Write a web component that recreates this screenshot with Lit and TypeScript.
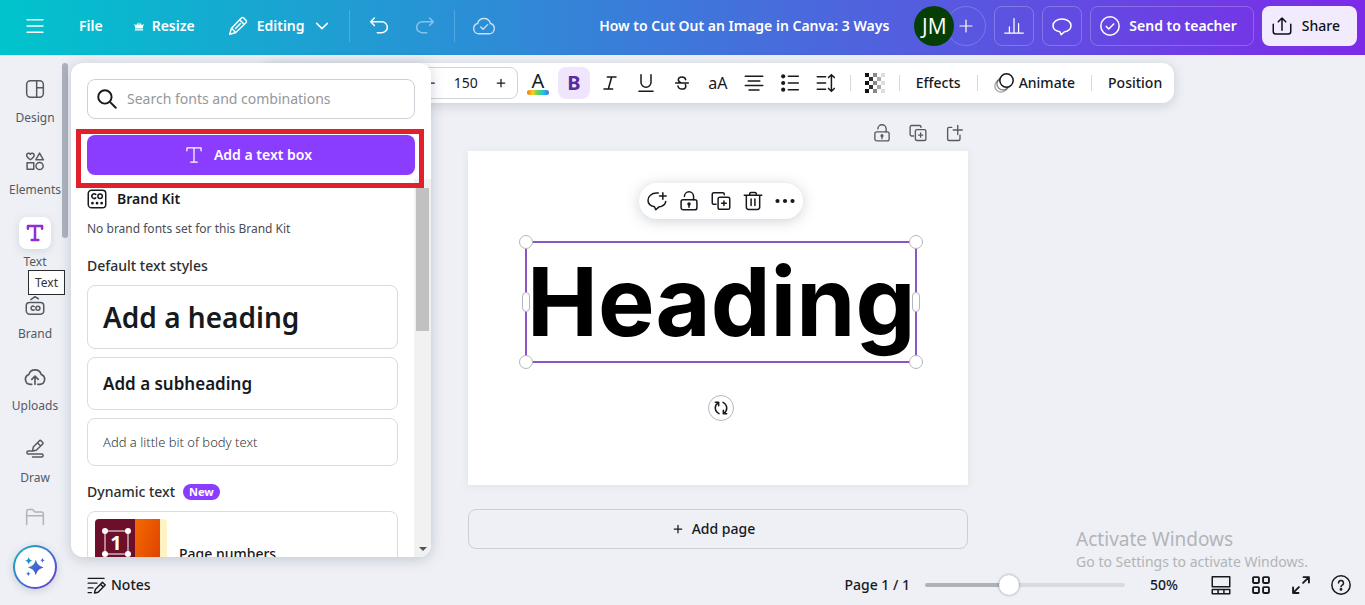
import { LitElement, html, css, svg, TemplateResult, SVGTemplateResult } from "lit";
import { customElement, state } from "lit/decorators.js";
import { classMap } from "lit/directives/class-map.js";

const paths: Record<string, SVGTemplateResult> = {
  menu: svg`<path d="M2.500 4.500h19M2.500 12h19M2.500 19.500h19"/>`,
  crown: svg`<path fill="currentColor" stroke="none" d="M4 18.500h16l.500 2.500H3.500zM2.500 7.500l4 3 2.500-5 1.500 5L12 3l1.500 7.500L15 5.500l2.500 5 4-3L19.500 17h-15z"/>`,
  pencil: svg`<path d="M2 22l2-7L16 2.500a2 2 0 0 1 2.800 0l2.700 2.700a2 2 0 0 1 0 2.800L9 20zM14 4.500l5.500 5.500M4.500 15L9 19.500M9 15l6-6"/>`,
  chevron: svg`<path d="M4 8l8 8 8-8"/>`,
  undo: svg`<path d="M6.500 2.500l-4.500 4.500 4.500 4.500M2 7h13.500a6.500 6.500 0 0 1 0 13H10"/>`,
  redo: svg`<path d="M17.500 2.500l4.500 4.500-4.500 4.500M22 7H8.500a6.500 6.500 0 0 0 0 13H14"/>`,
  cloudCheck: svg`<path d="M6.500 20.500a5.700 5.700 0 0 1-1.500-11.200 7.200 7.200 0 0 1 14 0 5.700 5.700 0 0 1-1.500 11.200zM8.500 13l2.500 2.500 5-5"/>`,
  plus: svg`<path d="M12 3v18M3 12h18"/>`,
  minus: svg`<path d="M4 12h16"/>`,
  chart: svg`<path d="M.8 20.500h22.400M6.500 20v-7M12 20V3M17.500 20V9"/>`,
  comment: svg`<path d="M9.500 19C4.500 18.200 1.200 15.300 1.200 11.500 1.200 7 6 3.500 12 3.500s10.800 3.500 10.800 8-3.300 7-8.300 7.700L11 22.500l-1.500-3.500z"/>`,
  checkCircle: svg`<circle cx="12" cy="12" r="11"/><path d="M7.500 12.500l3 3 6-6"/>`,
  share: svg`<path d="M12 17V2.500M7.500 7L12 2.500 16.500 7M1.500 10v8.500a3 3 0 0 0 3 3h15a3 3 0 0 0 3-3V10"/>`,
  design: svg`<rect x="2" y="2" width="20" height="20" rx="4.500"/><path d="M14 2v20M14 10.500h8"/>`,
  elements: svg`<path d="M6.500 10.500C3 8 2 6.600 2 5a2.400 2.400 0 0 1 4.500-1A2.400 2.400 0 0 1 11 5c0 1.600-1 3-4.500 5.500zM17.500 2.500l4.500 8h-9z"/><rect x="2.500" y="14" width="8" height="8"/><circle cx="17.500" cy="18" r="4.300"/>`,
  text: svg`<path d="M3.500 7V3.500h17V7M12 3.500v17M8 20.500h8"/>`,
  brand: svg`<rect x="1.500" y="9" width="21" height="14" rx="4"/><path d="M11 13.800a2.400 2.400 0 1 0 0 4"/><circle cx="15.500" cy="15.800" r="2.400"/><path d="M7 5.500l5-3.500 4 2.500"/>`,
  upload: svg`<path d="M8.500 20H7a5.500 5.500 0 0 1-1.700-10.700 7 7 0 0 1 13.500 0A5.500 5.500 0 0 1 17 20h-2M12 20v-8.500M8.500 14.500l3.500-3.500 3.500 3.500"/>`,
  draw: svg`<path d="M9 14.500l1-5L17 2.300a1.800 1.800 0 0 1 2.500 0l1.500 1.500a1.800 1.800 0 0 1 0 2.500l-7.500 7.200zM15 4.500l3.500 3.500M9 14.500H4a1.700 1.700 0 0 0 0 3.500h16a1.700 1.700 0 0 1 0 3.500H9"/>`,
  folder: svg`<path d="M2 21V5.500A2.500 2.500 0 0 1 4.500 3h4.500l3 3h7.500A2.500 2.500 0 0 1 22 8.500V21M2 10.500h20"/>`,
  search: svg`<circle cx="9.500" cy="9.500" r="8"/><path d="M15.500 15.500L22.500 22.500"/>`,
  kit: svg`<rect x="1.500" y="1.500" width="21" height="21" rx="4"/><path d="M10.500 6.500a2.800 2.800 0 1 0 0 4.200"/><circle cx="15.700" cy="8.600" r="2.700"/><path stroke-width="3.200" d="M6.500 17h.1M12 17h.1M17.500 17h.1"/>`,
  italic: svg`<path d="M8 3h13M3 21h13M14.500 3l-5 18"/>`,
  underline: svg`<path d="M6 2V11a6 6 0 0 0 12 0V2M3.500 22h17"/>`,
  strike: svg`<path d="M17.500 7c-.5-2.500-2.500-4-5.500-4-3.200 0-5.500 1.700-5.500 4.300 0 2.200 1.500 3.400 4 4.200M17 14.500c.4.700.7 1.300.7 2.200 0 2.600-2.400 4.300-5.700 4.300-3.500 0-5.700-1.800-6-4.500M2.500 12h19"/>`,
  align: svg`<path d="M1.500 4h21M5 9.500h14M1.500 15h21M6 20.500h12"/>`,
  list: svg`<path d="M10 4H22M10 12H22M10 20H22"/><g fill="currentColor" stroke="none"><circle cx="3.800" cy="4" r="2.500"/><circle cx="3.800" cy="12" r="2.500"/><circle cx="3.800" cy="20" r="2.500"/></g>`,
  spacing: svg`<path d="M1.500 4.500h10M1.500 12h10M1.500 19.500h10M18.500 2.500v19M15 5.500l3.500-3.500L22 5.500M15 18.500l3.500 3.500 3.500-3.500"/>`,
  animate: svg`<circle cx="8.500" cy="15.500" r="7.500" opacity=".35"/><circle cx="11" cy="13" r="7.500" opacity=".5"/><circle cx="15" cy="9" r="8" fill="#fff"/>`,
  unlock: svg`<rect x="2.500" y="10.500" width="19" height="12" rx="2.500"/><path d="M6.500 6.500a5.500 5.500 0 0 1 11 0v4M12 16v3.500"/><circle cx="12" cy="15.500" r="1.200" fill="currentColor"/>`,
  duplicate: svg`<path d="M6 16H3.500a2 2 0 0 1-2-2V4a2 2 0 0 1 2-2H14a2 2 0 0 1 2 2v.500"/><rect x="8.500" y="7.500" width="14" height="14.500" rx="2"/><path d="M15.500 12v5.500M12.700 14.800h5.600"/>`,
  newPage: svg`<path d="M9 4.500H5.500a2 2 0 0 0-2 2V20a2 2 0 0 0 2 2h12.500a2 2 0 0 0 2-2v-5M17 2v12M11 8h12"/>`,
  commentPlus: svg`<path d="M13.500 2.500h-2C5.500 2.500 1.200 6.500 1.200 11c0 4 2.800 7 7.800 7.800l1.500 3.700 3.500-3.200c5-.7 8-3.300 8.500-6.800M19 2v8M15 6h8"/>`,
  trash: svg`<path d="M1.500 5h21M8 5V3.500A1.800 1.800 0 0 1 9.800 1.700h4.400A1.800 1.800 0 0 1 16 3.500V5M4 5v14.500a2.700 2.700 0 0 0 2.700 2.700h10.600a2.700 2.700 0 0 0 2.700-2.700V5M9.700 9.500v8M14.300 9.500v8"/>`,
  more: svg`<g fill="currentColor" stroke="none"><circle cx="3" cy="12" r="2.500"/><circle cx="12" cy="12" r="2.500"/><circle cx="21" cy="12" r="2.500"/></g>`,
  rotate: svg`<path d="M9 20.500C1.500 16.500 2 7.500 8 4M3.500 3.500H8.500v5M15 3.500c7.500 4 7 13 1 16.500M20.500 20.500H15.500v-5"/>`,
  notes: svg`<path d="M1.500 3h20M1.500 9h11M1.500 15h6M1.500 21h4M9.500 21.500l1-4.500 9-9 3.500 3.500-9 9zM17 10.500l3.500 3.500"/>`,
  thumbs: svg`<rect x="1.500" y="2" width="21" height="12"/><path d="M1.500 17.500h21V22.500h-21zM8.500 17.500v5M15.500 17.500v5"/>`,
  grid: svg`<rect x="2.500" y="2.500" width="7" height="7" rx="1"/><rect x="14.500" y="2.500" width="7" height="7" rx="1"/><rect x="2.500" y="14.500" width="7" height="7" rx="1"/><rect x="14.500" y="14.500" width="7" height="7" rx="1"/>`,
  expand: svg`<path d="M14.500 9.500l7-7M15 2.500h6.500V9M9.500 14.500l-7 7M2.500 15v6.500H9"/>`,
  help: svg`<circle cx="12" cy="12" r="11"/><path d="M9 9.500a3 3 0 1 1 4.500 2.600c-1 .6-1.500 1.100-1.500 2.100"/><circle cx="12" cy="17.300" r=".8" fill="currentColor"/>`,
};

const icon = (name: string, size = "m", weight = "regular"): TemplateResult => html`
  <svg class="icon ${size} ${weight}" viewBox="0 0 24 24" aria-hidden="true">${paths[name]}</svg>
`;

const railItems = [
  { id: "design", label: "Design" },
  { id: "elements", label: "Elements" },
  { id: "text", label: "Text" },
  { id: "brand", label: "Brand" },
  { id: "upload", label: "Uploads" },
  { id: "draw", label: "Draw" },
];

const checkerShades = [
  ["#111", "", "#888", "", "#ddd"],
  ["", "#333", "", "#aaa", ""],
  ["#111", "", "#888", "", "#ddd"],
  ["", "#333", "", "#aaa", ""],
  ["#111", "", "#888", "", "#ddd"],
];

@customElement("app-root")
export class AppRoot extends LitElement {
  @state() private tool = "text";
  @state() private bold = true;
  @state() private zoom = 41;

  static styles = css`
    :host {
      display: flex;
      flex-direction: column;
      height: 100vh;
      min-height: 600px;
      overflow: hidden;
      background: #eef0f5;
      color: #16191d;
      font: 500 14px/20px "Noto Sans", "Open Sans", sans-serif;
    }
    * { box-sizing: border-box; }
    button, input { font: inherit; color: inherit; }
    button {
      display: inline-flex;
      align-items: center;
      justify-content: center;
      padding: 0;
      border: 0;
      background: none;
      white-space: nowrap;
      cursor: pointer;
    }
    .icon {
      flex: none;
      width: 20px;
      height: 20px;
      fill: none;
      stroke: currentColor;
      stroke-width: 1.8;
      stroke-linecap: round;
      stroke-linejoin: round;
    }
    .icon.xs { width: 12px; height: 12px; }
    .icon.s { width: 16px; height: 16px; }
    .icon.l { width: 22px; height: 22px; }
    .icon.bold { stroke-width: 3; }
    .icon.medium { stroke-width: 2.3; }
    .icon.thin { stroke-width: 1.5; }

    .header {
      display: flex;
      justify-content: space-between;
      flex: none;
      height: 55px;
      padding: 6px 8px;
      background: linear-gradient(90deg, #00c4cc, #7d2ae8);
      color: #fff;
      font-weight: 600;
    }
    .group { display: flex; align-items: center; height: 40px; }
    .header-button { height: 40px; padding: 0 15px; gap: 7px; }
    .menu-button { width: 56px; height: 40px; padding-right: 2px; }
    .mode { gap: 9px; padding: 0 13px 0 18px; }
    .icon-button { width: 46px; height: 40px; }
    .faded { opacity: 0.45; }
    .soft { opacity: 0.75; }
    .divider { width: 1px; height: 32px; background: rgba(255, 255, 255, 0.2); margin: 0 6px; }
    .right { gap: 8px; }
    .title { margin: 0 17px 0 0; font-size: 14px; font-weight: 600; }
    .people { display: flex; }
    .avatar {
      position: relative;
      z-index: 1;
      display: grid;
      place-items: center;
      width: 40px;
      height: 40px;
      border-radius: 50%;
      background: #063f06;
      font: 500 21px/24px "Open Sans", sans-serif;
    }
    .invite {
      width: 40px;
      height: 40px;
      margin-left: -8px;
      border: 1px solid rgba(255, 255, 255, 0.2);
      border-radius: 50%;
    }
    .outlined {
      min-width: 40px;
      height: 40px;
      border: 1px solid rgba(255, 255, 255, 0.22);
      border-radius: 8px;
    }
    .send { gap: 9px; padding: 0 16px 0 9px; }
    .share {
      height: 40px;
      gap: 10px;
      padding: 0 17px 0 10px;
      border-radius: 8px;
      background: #f2ebfd;
      color: #0d1216;
      font-weight: 500;
    }

    .body { display: flex; flex: 1; min-height: 0; }
    .rail {
      position: relative;
      display: flex;
      flex-direction: column;
      flex: none;
      width: 71px;
      padding-top: 18px;
      color: #555961;
      font-size: 12px;
      font-weight: 400;
      line-height: 17px;
    }
    .rail-item {
      flex-direction: column;
      justify-content: flex-start;
      flex: none;
      gap: 4px;
      width: 70px;
      height: 72px;
    }
    .rail-icon {
      display: grid;
      place-items: center;
      width: 32px;
      height: 32px;
      border-radius: 8px;
    }
    .active .rail-icon {
      background: #fff;
      color: #8b2fd6;
      box-shadow: 0 2px 8px rgba(57, 76, 96, 0.15);
    }
    .folder { height: 24px; overflow: hidden; opacity: 0.4; }
    .rail-thumb {
      position: absolute;
      top: 8px;
      right: 3px;
      width: 6px;
      height: 175px;
      border-radius: 3px;
      background: #adb3be;
    }
    .tip {
      position: absolute;
      top: 215px;
      left: 28px;
      padding: 3px 6px;
      border: 1px solid #2b2b2b;
      background: #fff;
      color: #333;
    }
    .assistant {
      position: absolute;
      bottom: 16px;
      left: 13px;
      width: 44px;
      height: 44px;
      border: 2px solid transparent;
      border-radius: 50%;
      background: linear-gradient(#fff, #fff) padding-box,
        linear-gradient(135deg, #12b5c9, #6a35d0) border-box;
      box-shadow: 0 2px 8px rgba(57, 76, 96, 0.2);
    }

    .workspace {
      position: relative;
      display: flex;
      flex-direction: column;
      align-items: center;
      flex: 1;
      min-width: 0;
    }
    .panel {
      position: absolute;
      top: 8px;
      bottom: 48px;
      left: 0;
      z-index: 2;
      display: flex;
      flex-direction: column;
      width: 360px;
      padding-top: 16px;
      border-radius: 12px;
      background: #fff;
      box-shadow: 0 2px 14px rgba(57, 76, 96, 0.25);
    }
    .search {
      display: flex;
      align-items: center;
      flex: none;
      gap: 10px;
      height: 40px;
      margin: 0 16px;
      padding: 0 9px;
      border: 1px solid #cdd0d6;
      border-radius: 8px;
    }
    .search input {
      flex: 1;
      min-width: 0;
      padding: 0;
      border: 0;
      outline: 0;
      background: none;
      font-weight: 400;
    }
    .search input::placeholder { color: #94979c; opacity: 1; }
    .add-text {
      flex: none;
      gap: 10px;
      height: 40px;
      margin: 16px 16px 0;
      padding-right: 6px;
      border-radius: 8px;
      background: #8b3dff;
      color: #fff;
      font-weight: 600;
    }
    .mark {
      position: absolute;
      top: 66px;
      right: 7px;
      left: 5px;
      z-index: 1;
      height: 59px;
      border: 5px solid #e0202b;
      pointer-events: none;
    }
    .scroller {
      display: flex;
      flex: 1;
      min-height: 0;
      margin-top: 4px;
      overflow: hidden;
      border-radius: 0 0 12px 12px;
    }
    .styles { flex: 1; min-width: 0; padding: 10px 16px 0; }
    .kit { display: flex; align-items: center; gap: 10px; font-weight: 600; }
    .note {
      margin: 12px 0 0;
      color: #4a4e55;
      font-size: 12px;
      font-weight: 400;
      line-height: 16px;
    }
    h2 {
      display: flex;
      align-items: center;
      gap: 8px;
      margin: 19px 0 9px;
      color: #2a2e33;
      font-size: 14px;
      font-weight: 500;
      line-height: 20px;
    }
    .style {
      justify-content: flex-start;
      width: 100%;
      margin-bottom: 8px;
      padding: 0 15px;
      border: 1px solid #d9dbe0;
      border-radius: 8px;
    }
    .heading { height: 64px; font-size: 28px; font-weight: 600; line-height: 36px; }
    .subheading { height: 53px; font-size: 17px; font-weight: 600; }
    .body-text { height: 48px; color: #33373c; font-size: 13px; font-weight: 300; }
    .styles h2.dynamic { margin-top: 8px; }
    .badge {
      padding: 0 6px;
      border-radius: 8px;
      background: #8b3dff;
      color: #fff;
      font-size: 11px;
      font-weight: 700;
      line-height: 16px;
    }
    .numbers { align-items: flex-start; gap: 12px; height: 88px; padding: 7px; }
    .numbers-label { margin-top: 25px; font-size: 14px; font-weight: 500; }
    .numbers-art { width: 72px; height: 72px; border-radius: 4px; }
    .track {
      display: flex;
      flex-direction: column;
      align-items: center;
      flex: none;
      width: 17px;
      padding: 9px 0 6px;
      background: #f1f1f1;
    }
    .thumb { flex: none; width: 13px; height: 143px; background: #c1c1c1; }
    .arrow {
      margin-top: auto;
      border: 4px solid transparent;
      border-top-color: #50535a;
      border-bottom: 0;
    }

    .toolbar {
      display: flex;
      align-items: center;
      flex: none;
      gap: 4px;
      height: 40px;
      margin-top: 8px;
      padding: 0 4px;
      border-radius: 12px;
      background: #fff;
      box-shadow: 0 2px 12px rgba(57, 76, 96, 0.22);
    }
    .tool { width: 32px; height: 32px; border-radius: 8px; }
    .tool.on { background: #efe6fd; color: #5a2ca0; }
    .letter { font-size: 20px; font-weight: 700; }
    .case { font-size: 16px; font-weight: 400; }
    .text-tool { height: 32px; gap: 5px; padding: 0 8px; }
    .tool-divider { width: 1px; height: 16px; margin: 0 4px; background: #d5d8de; }
    .font-picker {
      justify-content: flex-end;
      width: 144px;
      height: 32px;
      padding: 0 8px;
      border: 1px solid #d0d3d9;
      border-radius: 8px;
    }
    .stepper {
      display: flex;
      width: 104px;
      height: 32px;
      border: 1px solid #d0d3d9;
      border-radius: 8px;
    }
    .stepper button { flex: 1; }
    .stepper .icon { width: 10px; height: 10px; }
    .stepper input {
      width: 38px;
      padding: 0;
      border: 0;
      background: none;
      font-weight: 400;
      text-align: center;
    }
    .color { flex-direction: column; }
    .color span { font-size: 20px; font-weight: 400; line-height: 18px; }
    .swatch {
      width: 22px;
      height: 5px;
      border-radius: 3px;
      background: linear-gradient(90deg, #f2701d, #ffce1f, #5fd35c, #15c5e8, #4b6bf5);
    }
    .canvas { width: 100%; max-width: 500px; }
    .page-actions {
      display: flex;
      justify-content: flex-end;
      gap: 16px;
      padding: 20px 4px 8px;
      color: #555961;
    }
    .page-actions .icon { width: 18px; height: 18px; }
    .page-actions button { width: 20px; height: 20px; }
    .page {
      position: relative;
      height: 334px;
      background: #fff;
      box-shadow: 0 1px 8px rgba(57, 76, 96, 0.08);
    }
    .quick {
      position: absolute;
      top: 32px;
      left: 171px;
      display: flex;
      gap: 12px;
      padding: 8px;
      border-radius: 18px;
      background: #fff;
      box-shadow: 0 2px 14px rgba(57, 76, 96, 0.25);
    }
    .selection {
      position: absolute;
      top: 90px;
      left: 57px;
      display: grid;
      place-items: center;
      width: 392px;
      height: 122px;
      border: 2px solid #8a55c4;
      color: #000;
      font: 700 95px/118px Inter, "Open Sans", sans-serif;
    }
    .handle {
      position: absolute;
      width: 14px;
      height: 14px;
      border: 1px solid #b3b6bc;
      border-radius: 50%;
      background: #fff;
    }
    .side { width: 8px; height: 20px; border-radius: 4px; top: 49px; }
    .top { top: -8px; }
    .bottom { bottom: -8px; }
    .west { left: -8px; }
    .east { right: -8px; }
    .side.west { left: -5px; }
    .side.east { right: -5px; }
    .rotate {
      position: absolute;
      top: 244px;
      left: 240px;
      width: 26px;
      height: 26px;
      border: 1px solid #b3b6bc;
      border-radius: 50%;
      background: #fff;
    }
    .add-page {
      gap: 9px;
      width: 100%;
      height: 40px;
      margin-top: 24px;
      padding-right: 8px;
      border: 1px solid #cccfd6;
      border-radius: 8px;
    }
    .add-page .icon { width: 10px; height: 10px; }
    .footer {
      display: flex;
      align-items: center;
      align-self: stretch;
      justify-content: space-between;
      height: 40px;
      margin-top: auto;
      padding: 0 14px 0 16px;
    }
    .notes { gap: 5px; }
    .notes .icon { width: 19px; height: 19px; }
    .view { display: flex; align-items: center; }
    .view input {
      appearance: none;
      width: 200px;
      height: 20px;
      margin: 0 25px 0 15px;
      background: none;
    }
    .view input::-webkit-slider-runnable-track {
      height: 4px;
      border-radius: 2px;
      background: linear-gradient(90deg, #adb2bc 41%, #d7dade 41%);
    }
    .view input::-webkit-slider-thumb {
      appearance: none;
      width: 20px;
      height: 20px;
      margin-top: -8px;
      border-radius: 50%;
      background: #fff;
      box-shadow: 0 0 3px rgba(40, 50, 70, 0.5);
    }
    .view-buttons { display: flex; gap: 20px; margin-left: 33px; }
    .watermark {
      position: absolute;
      right: 57px;
      bottom: 33px;
      color: #b2b4b8;
      font: 400 14px/20px "Noto Sans", "Open Sans", sans-serif;
      pointer-events: none;
    }
    .watermark strong { display: block; font-size: 19px; font-weight: 400; line-height: 26px; }
  `;

  private renderHeader() {
    return html`
      <header class="header">
        <nav class="group" aria-label="File">
          <button class="menu-button" aria-label="Menu">${icon("menu")}</button>
          <button class="header-button">File</button>
          <button class="header-button">${icon("crown", "xs")}Resize</button>
          <button class="header-button mode">${icon("pencil")}Editing${icon("chevron", "s", "medium")}</button>
          <span class="divider"></span>
          <button class="icon-button" aria-label="Undo">${icon("undo")}</button>
          <button class="icon-button faded" aria-label="Redo">${icon("redo")}</button>
          <span class="divider"></span>
          <button class="icon-button soft" aria-label="Saved">${icon("cloudCheck", "l", "thin")}</button>
        </nav>
        <div class="group right">
          <h1 class="title">How to Cut Out an Image in Canva: 3 Ways</h1>
          <div class="people">
            <span class="avatar">JM</span>
            <button class="invite" aria-label="Invite">${icon("plus", "s")}</button>
          </div>
          <button class="outlined" aria-label="Insights">${icon("chart", "m", "thin")}</button>
          <button class="outlined" aria-label="Comments">${icon("comment")}</button>
          <button class="outlined send">${icon("checkCircle")}Send to teacher</button>
          <button class="share">${icon("share")}Share</button>
        </div>
      </header>
    `;
  }

  private renderRail() {
    return html`
      <nav class="rail" aria-label="Tools">
        ${railItems.map(
          (item) => html`
            <button
              class=${classMap({ "rail-item": true, active: item.id === this.tool })}
              @click=${() => (this.tool = item.id)}
            >
              <span class="rail-icon">
                ${icon(item.id, item.id === "upload" ? "l" : "m", item.id === "text" ? "bold" : "regular")}
              </span>
              ${item.label}
            </button>
          `
        )}
        <button class="rail-item folder" aria-label="Projects">
          <span class="rail-icon">${icon("folder")}</span>
        </button>
        <span class="rail-thumb"></span>
        <span class="tip" role="tooltip">Text</span>
        <button class="assistant" aria-label="Assistant">
          <svg width="20" height="20" viewBox="0 0 24 24" aria-hidden="true">
            <defs>
              <linearGradient id="spark" x2="1" y2="1">
                <stop stop-color="#12a5d0" />
                <stop offset="1" stop-color="#6a35d0" />
              </linearGradient>
            </defs>
            <path
              fill="url(#spark)"
              d="M13 3c1.800 6 3.500 7.700 9.500 9.500-6 1.800-7.700 3.500-9.500 9.500-1.800-6-3.500-7.700-9.500-9.500C9.500 10.700 11.200 9 13 3zM4.500 0c.8 3 1.500 3.700 4.500 4.500C6 5.300 5.300 6 4.500 9 3.700 6 3 5.300 0 4.500 3 3.700 3.700 3 4.500 0zM21 1c.5 2 1 2.500 3 3-2 .5-2.500 1-3 3-.5-2-1-2.500-3-3 2-.5 2.500-1 3-3zM4 17c.5 2 1 2.500 3 3-2 .5-2.500 1-3 3-.5-2-1-2.500-3-3 2-.5 2.500-1 3-3z"
            />
          </svg>
        </button>
      </nav>
    `;
  }

  private renderPanel() {
    return html`
      <section class="panel" aria-label="Text">
        <label class="search">
          ${icon("search", "m", "medium")}
          <input type="search" aria-label="Search fonts and combinations" placeholder="Search fonts and combinations" />
        </label>
        <button class="add-text">${icon("text", "m", "thin")}Add a text box</button>
        <span class="mark"></span>
        <div class="scroller">
          <div class="styles">
            <div class="kit">${icon("kit")}Brand Kit</div>
            <p class="note">No brand fonts set for this Brand Kit</p>
            <h2>Default text styles</h2>
            <button class="style heading">Add a heading</button>
            <button class="style subheading">Add a subheading</button>
            <button class="style body-text">Add a little bit of body text</button>
            <h2 class="dynamic">Dynamic text<span class="badge">New</span></h2>
            <button class="style numbers">
              <svg class="numbers-art" viewBox="0 0 72 72" aria-hidden="true">
                <defs>
                  <linearGradient id="orange" x2="1" y2="1">
                    <stop stop-color="#f56a00" />
                    <stop offset="1" stop-color="#d93800" />
                  </linearGradient>
                </defs>
                <rect width="72" height="72" fill="#fff3c4" />
                <rect x="40" width="25" height="72" fill="url(#orange)" />
                <rect width="40" height="72" fill="#6b0f2b" />
                <rect x="10" y="12" width="23" height="23" fill="none" stroke="#fff" />
                <g fill="#fff">
                  <circle cx="10" cy="12" r="3" /><circle cx="33" cy="12" r="3" />
                  <circle cx="10" cy="35" r="3" /><circle cx="33" cy="35" r="3" />
                  <text x="21" y="31" text-anchor="middle" font-size="20" font-weight="700">1</text>
                </g>
              </svg>
              <span class="numbers-label">Page numbers</span>
            </button>
          </div>
          <div class="track"><span class="thumb"></span><span class="arrow"></span></div>
        </div>
      </section>
    `;
  }

  private renderToolbar() {
    return html`
      <div class="toolbar" role="toolbar" aria-label="Text formatting">
        <button class="font-picker" aria-label="Font">${icon("chevron", "xs")}</button>
        <div class="stepper">
          <button aria-label="Smaller">${icon("minus", "xs", "bold")}</button>
          <input aria-label="Font size" value="150" />
          <button aria-label="Larger">${icon("plus", "xs", "bold")}</button>
        </div>
        <button class="tool color" aria-label="Text color"><span>A</span><i class="swatch"></i></button>
        <button
          class=${classMap({ tool: true, letter: true, on: this.bold })}
          aria-pressed=${this.bold}
          @click=${() => (this.bold = !this.bold)}
        >B</button>
        <button class="tool" aria-label="Italic">${icon("italic", "s", "medium")}</button>
        <button class="tool" aria-label="Underline">${icon("underline", "m")}</button>
        <button class="tool" aria-label="Strikethrough">${icon("strike", "s", "medium")}</button>
        <button class="tool case">aA</button>
        <button class="tool" aria-label="Align">${icon("align")}</button>
        <button class="tool" aria-label="List">${icon("list")}</button>
        <button class="tool" aria-label="Spacing">${icon("spacing")}</button>
        <span class="tool-divider"></span>
        <button class="tool" aria-label="Transparency">
          <svg width="20" height="20" viewBox="0 0 20 20" aria-hidden="true">
            ${checkerShades.map((row, y) =>
              row.map((fill, x) =>
                fill ? svg`<rect x=${x * 4} y=${y * 4} width="4" height="4" fill=${fill} />` : ""
              )
            )}
          </svg>
        </button>
        <span class="tool-divider"></span>
        <button class="text-tool">Effects</button>
        <span class="tool-divider"></span>
        <button class="text-tool">${icon("animate")}Animate</button>
        <span class="tool-divider"></span>
        <button class="text-tool">Position</button>
      </div>
    `;
  }

  private renderCanvas() {
    return html`
      <div class="canvas">
        <div class="page-actions">
          <button aria-label="Lock page">${icon("unlock")}</button>
          <button aria-label="Duplicate page">${icon("duplicate")}</button>
          <button aria-label="New page">${icon("newPage")}</button>
        </div>
        <div class="page">
          <div class="quick">
            <button aria-label="Comment">${icon("commentPlus")}</button>
            <button aria-label="Lock">${icon("unlock")}</button>
            <button aria-label="Duplicate">${icon("duplicate")}</button>
            <button aria-label="Delete">${icon("trash")}</button>
            <button aria-label="More">${icon("more")}</button>
          </div>
          <div class="selection">
            Heading
            <i class="handle top west"></i><i class="handle top east"></i>
            <i class="handle bottom west"></i><i class="handle bottom east"></i>
            <i class="handle side west"></i><i class="handle side east"></i>
          </div>
          <button class="rotate" aria-label="Rotate">${icon("rotate", "s", "medium")}</button>
        </div>
        <button class="add-page">${icon("plus", "xs", "bold")}Add page</button>
      </div>
    `;
  }

  private renderFooter() {
    return html`
      <footer class="footer">
        <button class="notes">${icon("notes")}Notes</button>
        <div class="view">
          <span>Page 1 / 1</span>
          <input
            type="range"
            aria-label="Zoom"
            .value=${String(this.zoom)}
            @input=${(e: Event) => (this.zoom = Number((e.target as HTMLInputElement).value))}
          />
          <span>50%</span>
          <div class="view-buttons">
            <button aria-label="Pages">${icon("thumbs")}</button>
            <button aria-label="Grid view">${icon("grid", "m", "medium")}</button>
            <button aria-label="Full screen">${icon("expand", "m", "medium")}</button>
            <button aria-label="Help">${icon("help")}</button>
          </div>
        </div>
      </footer>
    `;
  }

  render() {
    return html`
      ${this.renderHeader()}
      <div class="body">
        ${this.renderRail()}
        <main class="workspace">
          ${this.renderPanel()} ${this.renderToolbar()} ${this.renderCanvas()} ${this.renderFooter()}
          <div class="watermark"><strong>Activate Windows</strong>Go to Settings to activate Windows.</div>
        </main>
      </div>
    `;
  }
}
